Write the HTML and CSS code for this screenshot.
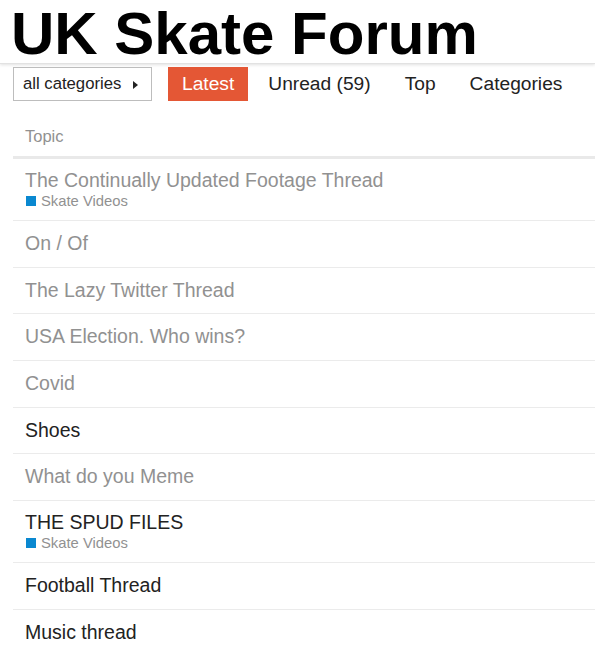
FILE: index.html
```html
<!DOCTYPE html>
<html lang="en">
<head>
<meta charset="utf-8">
<title>UK Skate Forum</title>
<link rel="stylesheet" href="styles.css">
</head>
<body>
<header class="site-header">
  <h1 class="site-title">UK Skate Forum</h1>
</header>
<nav class="nav">
  <div class="cat-drop">all categories <span class="caret"></span></div>
  <ul class="nav-pills">
    <li class="pill active">Latest</li>
    <li class="pill">Unread (59)</li>
    <li class="pill">Top</li>
    <li class="pill">Categories</li>
  </ul>
</nav>
<div class="topic-list">
  <div class="topic-head">Topic</div>
  <div class="topic with-cat">
    <div class="title visited">The Continually Updated Footage Thread</div>
    <div class="cat"><span class="badge"></span>Skate Videos</div>
  </div>
  <div class="topic"><div class="title visited">On / Of</div></div>
  <div class="topic"><div class="title visited">The Lazy Twitter Thread</div></div>
  <div class="topic"><div class="title visited">USA Election. Who wins?</div></div>
  <div class="topic"><div class="title visited">Covid</div></div>
  <div class="topic"><div class="title">Shoes</div></div>
  <div class="topic"><div class="title visited">What do you Meme</div></div>
  <div class="topic with-cat">
    <div class="title">THE SPUD FILES</div>
    <div class="cat"><span class="badge"></span>Skate Videos</div>
  </div>
  <div class="topic"><div class="title">Football Thread</div></div>
  <div class="topic"><div class="title">Music thread</div></div>
</div>
</body>
</html>
```
FILE: styles.css
```css
html, body {
  margin: 0;
  padding: 0;
  background: #fff;
  font-family: "Liberation Sans", Arial, sans-serif;
  color: #222;
  overflow: hidden;
}
.site-header {
  height: 63px;
  padding-left: 11px;
  border-bottom: 1px solid #e2e2e2;
  box-shadow: 0 1px 3px rgba(0, 0, 0, 0.12);
}
.site-title {
  margin: 0;
  padding-top: 4px;
  font-size: 60px;
  line-height: 59px;
  font-weight: bold;
  color: #000;
  white-space: nowrap;
}
.nav {
  display: flex;
  align-items: stretch;
  padding: 3px 0 0 13px;
  height: 34px;
}
.cat-drop {
  box-sizing: border-box;
  width: 139px;
  height: 34px;
  border: 1px solid #bdbdbd;
  padding-left: 9px;
  font-size: 16.7px;
  line-height: 32px;
  color: #222;
  white-space: nowrap;
}
.caret {
  display: inline-block;
  width: 0;
  height: 0;
  margin-left: 7px;
  border-top: 4.5px solid transparent;
  border-bottom: 4.5px solid transparent;
  border-left: 5px solid #222;
  vertical-align: 0;
}
.nav-pills {
  display: flex;
  list-style: none;
  margin: 0 0 0 16px;
  padding: 0;
  gap: 6px;
}
.pill {
  padding: 0 14px;
  font-size: 19.2px;
  line-height: 34px;
  color: #222;
  white-space: nowrap;
}
.pill.active {
  background: #e45735;
  color: #fff;
}
.topic-list {
  margin-left: 13px;
  margin-top: 25px;
}
.topic-head {
  padding: 0 12px 10px;
  font-size: 16.5px;
  line-height: 20px;
  color: #919191;
  border-bottom: 3px solid #e9e9e9;
}
.topic {
  padding: 11px 12px 12.67px;
  border-bottom: 1px solid #ebebeb;
}
.topic.with-cat {
  padding: 10px 12px 8px;
}
.title {
  font-size: 19.5px;
  line-height: 22px;
  color: #222;
  white-space: nowrap;
}
.title.visited {
  color: #919191;
}
.cat {
  font-size: 14.8px;
  line-height: 21px;
  color: #919191;
}
.badge {
  display: inline-block;
  width: 10px;
  height: 10px;
  margin: 0 5px 0 1px;
  background: #0a88d0;
}
```
